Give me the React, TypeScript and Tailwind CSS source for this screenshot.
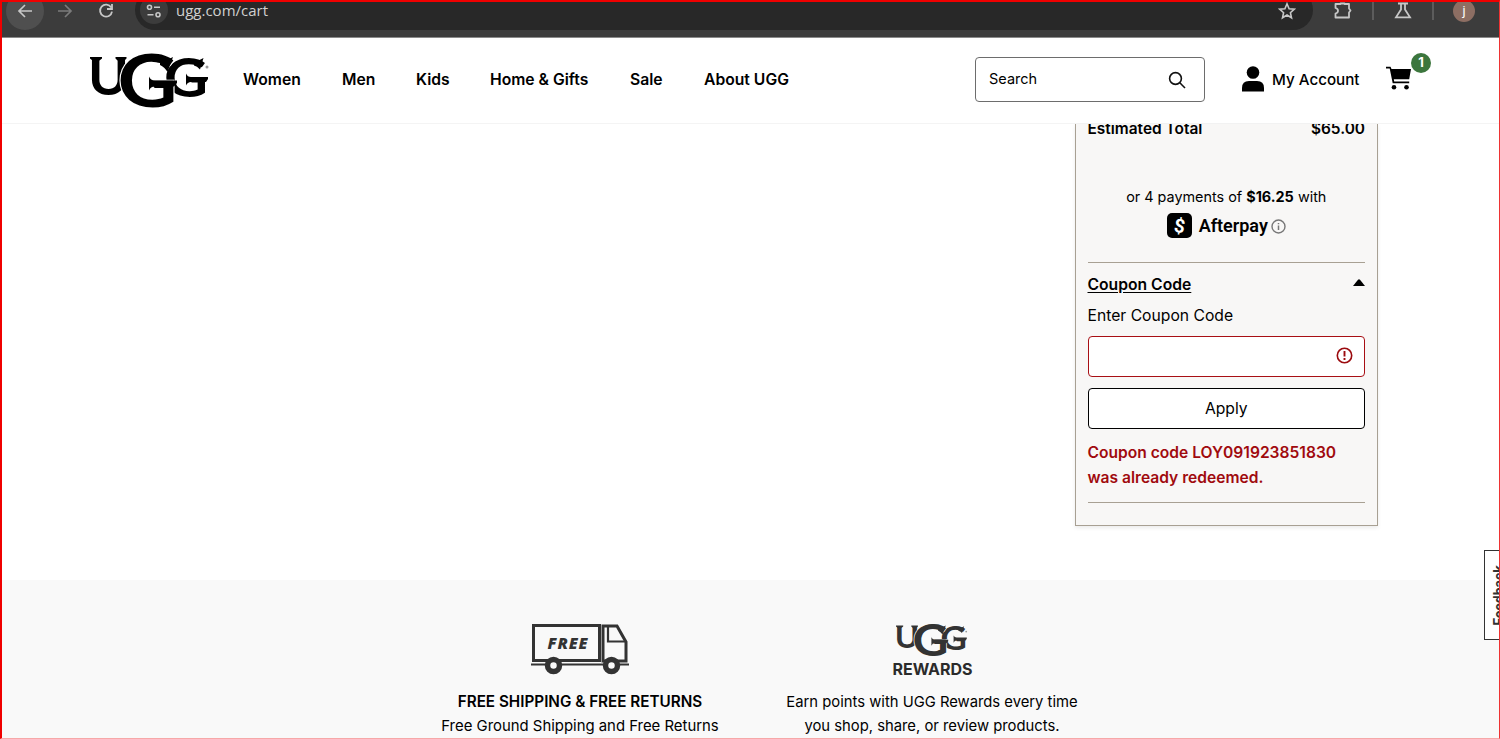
import React from 'react';

function Wordmark({ className, fill, edge }: { className: string; fill: string; edge: string }) {
  const letter = {
    fontFamily: 'Lato, sans-serif',
    fontWeight: 700,
    fill,
    stroke: edge,
    strokeWidth: 2,
    paintOrder: 'stroke' as const,
  };
  return (
    <svg viewBox="0 0 120 56" className={`${className} overflow-visible`} fill={fill} aria-label="UGG">
      <text x="-2" y="42" fontSize="52" textLength="41" lengthAdjust="spacingAndGlyphs" {...letter}>U</text>
      <path d="M0 4h12v1.500l-2.500 2h-7L0 5.500zM25.500 4h11v1.500l-2 2h-7l-2-2z" />
      <text x="74" y="44" fontSize="54" textLength="44" lengthAdjust="spacingAndGlyphs" {...letter}>G</text>
      <path d="M96 20.500q1.500 3.500 5 3.500h17v2l-2 3h-15q-3.500 0-5 3.500z" />
      <path d="M104 7.500q4 1 9.500-2.500L110 16.500q-3-3.500-6-4z" />
      <text x="27.500" y="54" fontSize="72" textLength="60" lengthAdjust="spacingAndGlyphs" {...letter}>G</text>
      <path d="M59 23.500q1.500 4 6 4h22v2.500l-3 3.500H65q-4.500 0-6 4z" />
      <path d="M70 5q7 3 13-1l-5.500 15q-3-5-7.500-7z" />
      <circle cx="117" cy="14" r="1.500" fill="#999" />
    </svg>
  );
}

function BrowserBar() {
  return (
    <div className="flex h-[38px] shrink-0 items-start overflow-hidden border-b border-[#8a8a8a] bg-[#3c3c3c] text-[#c7c7c7]">
      <div className="-mt-2 ml-1.5 flex size-[38px] items-center justify-center rounded-full bg-[#4f4f4f]">
        <svg viewBox="0 0 16 16" className="size-4" fill="none" stroke="currentColor" strokeWidth="1.7">
          <path d="M15 8H2M8 2L2 8l6 6" />
        </svg>
      </div>
      <svg viewBox="0 0 16 16" className="mt-[3px] ml-[13px] size-4 text-[#7b7b7b]" fill="none" stroke="currentColor" strokeWidth="1.7">
        <path d="M1 8h13M8 2l6 6-6 6" />
      </svg>
      <svg viewBox="0 0 16 16" className="mt-[3px] ml-[25px] size-4" fill="none" stroke="currentColor" strokeWidth="1.8">
        <path d="M13.2 4.5A6 6 0 1 0 14 8.6" />
        <path d="M14 1v5H9" />
      </svg>
      <div className="-mt-2.5 ml-[21px] flex h-10 w-[1178px] items-center rounded-full bg-[#282828]">
        <div className="ml-[5px] flex size-7 items-center justify-center rounded-full bg-[#3c3c3c]">
          <svg viewBox="0 0 16 16" className="mt-0.5 size-4" fill="none" stroke="currentColor" strokeWidth="1.6">
            <circle cx="3.5" cy="4.3" r="2" />
            <path d="M8 4.3h6M1.5 11.8h6" />
            <circle cx="12" cy="11.8" r="2" />
          </svg>
        </div>
        <span className="ml-2 pt-px font-['Open_Sans',sans-serif] text-[15px] text-[#d0d0d0]">ugg.com/cart</span>
        <svg viewBox="0 0 18 18" className="mt-0.5 mr-[17px] ml-auto size-[18px]" fill="none" stroke="currentColor" strokeWidth="1.6">
          <path d="M9 1.800l2.100 4.900 5.200.500-3.900 3.500 1.100 5.100L9 13l-4.500 2.800 1.100-5.100-3.900-3.500 5.200-.500z" />
        </svg>
      </div>
      <svg viewBox="0 0 20 20" className="ml-5 size-5" fill="none" stroke="currentColor" strokeWidth="1.8">
        <path d="M2.500 4h5V3.500h4V4h4.500v4.500l1.500 2-1.500 2v5H2.500v-4q2.500-.800 2.500-2.800t-2.500-2.700z" strokeLinejoin="round" />
      </svg>
      <div className="ml-[19px] h-5 w-0.5 bg-[#5c5c5c]" />
      <svg viewBox="0 0 18 20" className="ml-5 h-5 w-[18px]" fill="none" stroke="currentColor" strokeWidth="1.8">
        <path d="M4 3.500h10M7 3.500v6L2 17.300h14L11 9.500v-6" />
      </svg>
      <div className="ml-5 h-5 w-0.5 bg-[#5c5c5c]" />
      <div className="ml-[19px] flex size-[22px] items-center justify-center rounded-full bg-[#8d6e63] font-['Roboto',sans-serif] text-[13px] text-white">j</div>
    </div>
  );
}

function Header() {
  return (
    <header className="flex h-[86px] shrink-0 items-center border-b border-[#f4f4f4] bg-white pb-0.5">
      <Wordmark className="mt-0.5 ml-[90px] h-14 w-[120px]" fill="#000" edge="#fff" />
      <nav className="flex w-[760px] shrink-0 pt-px text-[15.7px] font-semibold">
        <a className="ml-[33px] w-[99px]">Women</a>
        <a className="w-[74px]">Men</a>
        <a className="w-[74px]">Kids</a>
        <a className="w-[140px] whitespace-nowrap">Home &amp; Gifts</a>
        <a className="w-[74px]">Sale</a>
        <a className="whitespace-nowrap">About UGG</a>
      </nav>
      <div className="ml-[5px] flex h-[45px] w-[230px] shrink-0 items-center rounded border border-[#6d6d6d] pl-[13px]">
        <span className="pb-px text-[14.5px]">Search</span>
        <svg viewBox="0 0 20 20" className="mr-[17px] ml-auto size-5" fill="none" stroke="#111" strokeWidth="1.6">
          <circle cx="8.500" cy="8.500" r="5.900" />
          <path d="M12.800 12.800l5.200 5.200" />
        </svg>
      </div>
      <svg viewBox="0 0 22 26" className="mb-px ml-[37px] h-[26px] w-[22px] shrink-0">
        <circle cx="11" cy="6.500" r="6.300" />
        <path d="M0 25.500v-3.500q0-7 7-7h8q7 0 7 7v3.500z" />
      </svg>
      <span className="ml-2 w-[88px] shrink-0 pt-px text-[15.2px] font-medium whitespace-nowrap">My Account</span>
      <div className="relative mb-[3px] ml-[26px] h-6 w-[26px] shrink-0">
        <svg viewBox="0 0 26 24" className="h-6 w-[26px]">
          <path d="M0 .800h4.500l1 2.200H25l-1.800 10.200H7.800l.400 2.300h15v1.700H6.700L3.700 2.500H0z" />
          <circle cx="8" cy="21.200" r="2.300" />
          <circle cx="20.500" cy="21.200" r="2.300" />
        </svg>
        <span className="absolute -top-[13px] left-[25px] flex size-5 items-center justify-center rounded-full bg-[#3c763d] text-[13px] font-bold text-white">1</span>
      </div>
    </header>
  );
}

function Summary() {
  return (
    <aside className="ml-[1075px] h-[402px] w-[303px] overflow-hidden border border-t-0 border-[#a8a093] bg-[#f8f7f6] pr-3 pl-[11.5px] text-[15.7px] shadow-[0_2px_4px_rgba(0,0,0,0.08)]">
      <div className="-mt-[7px] flex h-6 items-center justify-between text-[15.45px] font-semibold">
        <span>Estimated Total</span>
        <span>$65.00</span>
      </div>
      <p className="mt-11 h-6 text-center text-[14.4px] leading-6">or 4 payments of <b>$16.25</b> with</p>
      <div className="mt-[3px] flex h-[26px] items-center justify-center">
        <svg viewBox="0 0 25 25" className="size-[25px]">
          <rect width="25" height="25" rx="5" />
          <text x="12.500" y="19.500" textAnchor="middle" fill="#fff" fontFamily="Roboto, sans-serif" fontWeight="700" fontSize="19" transform="rotate(8 12.500 12.500)">$</text>
        </svg>
        <span className="ml-[7px] font-['Roboto',sans-serif] text-[18px] font-semibold">Afterpay</span>
        <svg viewBox="0 0 15 15" className="mt-0.5 ml-[3px] size-[15px]" fill="none" stroke="#777" strokeWidth="1.400">
          <circle cx="7.500" cy="7.500" r="6.500" />
          <path d="M7.500 6.500v4.500M7.500 4v1.300" strokeWidth="1.500" />
        </svg>
      </div>
      <div className="mt-6 h-px bg-[#a8a093]" />
      <div className="mt-[10px] flex h-6 items-center justify-between">
        <span className="font-semibold underline underline-offset-2">Coupon Code</span>
        <svg viewBox="0 0 12 7" className="-mt-1.5 h-[7px] w-3"><path d="M0 7L5 .800q1-1 2 0L12 7z" /></svg>
      </div>
      <label className="mt-[7px] block h-6 leading-6">Enter Coupon Code</label>
      <div className="mt-2 flex h-[41px] items-center justify-end rounded border border-[#a80f14] bg-white pr-[11px]">
        <svg viewBox="0 0 17 17" className="-mt-0.5 size-[17px]" fill="none" stroke="#9b0a0e" strokeWidth="1.600">
          <circle cx="8.500" cy="8.500" r="7.200" />
          <path d="M8.500 4v5.500M8.500 11v2" strokeWidth="1.900" />
        </svg>
      </div>
      <button className="mt-[11px] block h-[41px] w-full rounded border border-black bg-white">Apply</button>
      <p className="mt-[11px] text-[15.6px] leading-[25px] font-semibold text-[#a00a0e]">
        Coupon code LOY091923851830<br />was already redeemed.
      </p>
      <div className="mt-3 h-px bg-[#a8a093]" />
    </aside>
  );
}

function Truck() {
  return (
    <svg viewBox="0 0 98 52" className="h-[52px] w-[98px]" fill="none" stroke="#333">
      <path d="M2.500 1.500h66v35h-66z" strokeWidth="3" />
      <path d="M72 37V2h14l9 16v19z" strokeWidth="3" />
      <path d="M77 3v14.500h17" strokeWidth="2.200" />
      <path d="M0 40.500h98" strokeWidth="2" />
      <circle cx="22.500" cy="41.500" r="6" fill="#f9f9f9" strokeWidth="5.500" />
      <circle cx="80.500" cy="41.500" r="6" fill="#f9f9f9" strokeWidth="5.500" />
      <text x="36.500" y="24.500" textAnchor="middle" fill="#333" stroke="none" fontFamily="Open Sans, sans-serif" fontWeight="800" fontStyle="italic" fontSize="16" textLength="40">FREE</text>
    </svg>
  );
}

export default function App() {
  return (
    <div className="relative flex h-[739px] w-[1500px] flex-col overflow-hidden bg-white font-['Inter',sans-serif] text-[15px] text-black">
      <BrowserBar />
      <Header />
      <main className="h-[456px] shrink-0">
        <Summary />
      </main>
      <footer className="flex h-[159px] shrink-0 bg-[#f9f9f9] pl-[420px] text-center leading-6">
        <section className="flex w-[320px] flex-col items-center pt-11">
          <Truck />
          <h2 className="mt-[14px] text-[15.25px] font-semibold whitespace-nowrap">FREE SHIPPING &amp; FREE RETURNS</h2>
          <p className="text-[14.9px] whitespace-nowrap">Free Ground Shipping and Free Returns</p>
        </section>
        <section className="ml-8 flex w-[320px] flex-col items-center pt-[43px]">
          <Wordmark className="h-[34px] w-[72px]" fill="#333" edge="#f9f9f9" />
          <span className="h-[33px] pl-px text-[16px] leading-[25px] font-bold text-[#2b2b2b]">REWARDS</span>
          <p className="text-[14.8px] whitespace-nowrap">Earn points with UGG Rewards every time<br />you shop, share, or review products.</p>
        </section>
      </footer>
      <div className="absolute top-[550px] left-[1484px] flex h-[90px] w-[30px] items-center justify-center border border-[#333] bg-white">
        <span className="-rotate-90 font-['Roboto',sans-serif] text-[14px] font-bold text-[#333]">Feedback</span>
      </div>
      <div className="pointer-events-none absolute inset-0 border-t-2 border-r border-b border-l-2 border-t-[#f00000] border-r-[#e33] border-b-[#f7a8a8] border-l-[#f00000]" />
    </div>
  );
}
